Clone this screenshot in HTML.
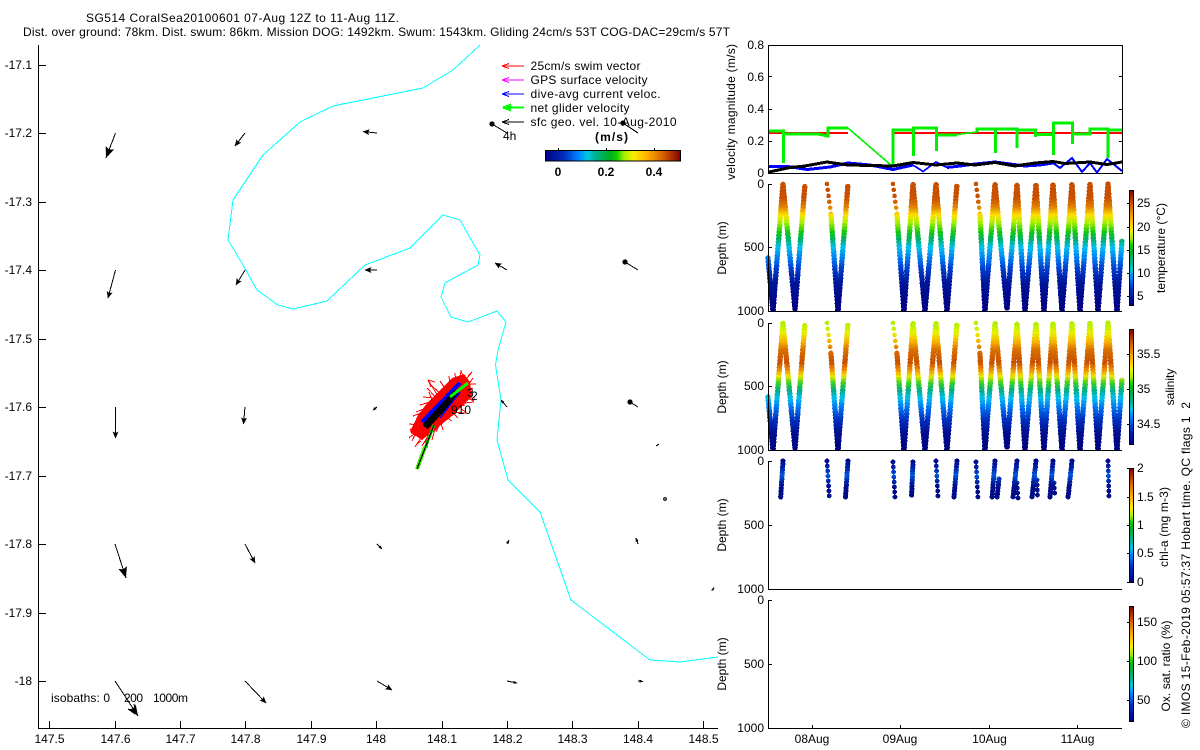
<!DOCTYPE html>
<html><head><meta charset="utf-8"><style>
html,body{margin:0;padding:0;background:#fff;width:1200px;height:750px;overflow:hidden}
svg{display:block}
text{font-family:"Liberation Sans",sans-serif;font-size:12px;fill:#000}
.e{text-anchor:end}.m{text-anchor:middle}.b{font-weight:bold}
.ax line,.ax path{stroke:#000;stroke-width:1;fill:none}
.ar line{stroke:#000;stroke-width:1;fill:none}
</style></head><body>
<svg width="1200" height="750" viewBox="0 0 1200 750" xmlns="http://www.w3.org/2000/svg">
<defs>
<linearGradient id="jv" x1="0" y1="1" x2="0" y2="0">
<stop offset="0" stop-color="#000080"/><stop offset=".14" stop-color="#0030c0"/><stop offset=".24" stop-color="#0080ff"/><stop offset=".31" stop-color="#00c8e0"/><stop offset=".37" stop-color="#00b090"/><stop offset=".48" stop-color="#00b020"/><stop offset=".53" stop-color="#10d000"/><stop offset=".58" stop-color="#a0ee00"/><stop offset=".65" stop-color="#f8f000"/><stop offset=".75" stop-color="#ffb000"/><stop offset=".87" stop-color="#d86000"/><stop offset="1" stop-color="#800000"/>
</linearGradient>
<linearGradient id="jh" x1="0" y1="0" x2="1" y2="0">
<stop offset="0" stop-color="#000080"/><stop offset=".14" stop-color="#0030c0"/><stop offset=".24" stop-color="#0080ff"/><stop offset=".31" stop-color="#00c8e0"/><stop offset=".37" stop-color="#00b090"/><stop offset=".48" stop-color="#00b020"/><stop offset=".53" stop-color="#10d000"/><stop offset=".58" stop-color="#a0ee00"/><stop offset=".65" stop-color="#f8f000"/><stop offset=".75" stop-color="#ffb000"/><stop offset=".87" stop-color="#d86000"/><stop offset="1" stop-color="#800000"/>
</linearGradient>
<linearGradient id="gt" gradientUnits="userSpaceOnUse" x1="0" y1="184" x2="0" y2="311">
<stop offset="0" stop-color="#c84e00"/><stop offset=".11" stop-color="#c85000"/><stop offset=".18" stop-color="#e08000"/><stop offset=".245" stop-color="#ffe000"/><stop offset=".3" stop-color="#b0f000"/><stop offset=".38" stop-color="#10c810"/><stop offset=".44" stop-color="#00b070"/><stop offset=".5" stop-color="#00c0f0"/><stop offset=".58" stop-color="#0080f0"/><stop offset=".66" stop-color="#0040d0"/><stop offset=".78" stop-color="#001498"/><stop offset="1" stop-color="#000080"/>
</linearGradient>
<linearGradient id="gs" gradientUnits="userSpaceOnUse" x1="0" y1="184" x2="0" y2="311">
<stop offset="0" stop-color="#b0f000"/><stop offset=".08" stop-color="#e8f000"/><stop offset=".15" stop-color="#f8b000"/><stop offset=".21" stop-color="#d87000"/><stop offset=".31" stop-color="#c85000"/><stop offset=".37" stop-color="#f09000"/><stop offset=".42" stop-color="#e8e800"/><stop offset=".47" stop-color="#40d020"/><stop offset=".53" stop-color="#00b080"/><stop offset=".59" stop-color="#00c0f0"/><stop offset=".67" stop-color="#0070f0"/><stop offset=".76" stop-color="#0030c0"/><stop offset=".86" stop-color="#001090"/><stop offset="1" stop-color="#000080"/>
</linearGradient>
<linearGradient id="gc" gradientUnits="userSpaceOnUse" x1="0" y1="461" x2="0" y2="498">
<stop offset="0" stop-color="#000c90"/><stop offset=".2" stop-color="#0024a8"/><stop offset=".38" stop-color="#0058dc"/><stop offset=".55" stop-color="#0024a8"/><stop offset=".7" stop-color="#000c88"/><stop offset="1" stop-color="#000c88"/>
</linearGradient>
<path id="vm" d="M768,258 L773,311 L783,184 L795,309 L805,184 M831,215 L838,311 L848,184 M897,215 L904,311 L913,184 L925,311 L936,184 L947,311 L957,184 M980,215 L985,311 L995,184 L1007,309 L1017,184 L1025,311 L1036,184 L1044,311 L1053,184 L1062,311 L1072,184 L1080,311 L1090,184 L1098,311 L1108,184 L1117,311 L1122,240"/>
<path id="vt" d="M827,184 L831,215 M893,184 L897,215 M976,184 L980,215"/>
<clipPath id="c2"><rect x="760" y="178" width="368" height="133"/></clipPath>
<clipPath id="c3"><rect x="760" y="317" width="368" height="133"/></clipPath>
<marker id="a1" markerUnits="userSpaceOnUse" markerWidth="12" markerHeight="10" refX="11" refY="5" viewBox="0 0 12 10" orient="auto"><path d="M0,0.5 L11,5 L0,9.5 L2,5 Z" fill="#000"/></marker>
<marker id="a2" markerUnits="userSpaceOnUse" markerWidth="7" markerHeight="6" refX="6.5" refY="3" viewBox="0 0 7 6" orient="auto"><path d="M0,0 L7,3 L0,6 L1.5,3 Z" fill="#000"/></marker>
<marker id="a3" markerUnits="userSpaceOnUse" markerWidth="4" markerHeight="4" refX="3.5" refY="2" viewBox="0 0 4 4" orient="auto"><path d="M0,.5 L4,2 L0,3.5 Z" fill="#000"/></marker>
<marker id="d1" markerUnits="userSpaceOnUse" markerWidth="6" markerHeight="6" refX="3" refY="3" viewBox="0 0 6 6" orient="auto"><circle cx="3" cy="3" r="2.6" fill="#000"/></marker>
</defs>

<!-- titles -->
<text x="86" y="22" textLength="313">SG514 CoralSea20100601 07-Aug 12Z to 11-Aug 11Z.</text>
<text x="23" y="36" textLength="707">Dist. over ground: 78km. Dist. swum: 86km. Mission DOG: 1492km. Swum: 1543km. Gliding 24cm/s 53T COG-DAC=29cm/s 57T</text>

<!-- map axes -->
<g class="ax" shape-rendering="crispEdges">
<line x1="38.5" y1="45" x2="38.5" y2="729"/><line x1="38" y1="728.5" x2="718" y2="728.5"/>
<path d="M39,65.5h7M39,133.5h7M39,202.5h7M39,270.5h7M39,339.5h7M39,407.5h7M39,476.5h7M39,544.5h7M39,613.5h7M39,681.5h7"/>
<path d="M49.5,728v-7M115.5,728v-7M180.5,728v-7M245.5,728v-7M311.5,728v-7M376.5,728v-7M442.5,728v-7M507.5,728v-7M572.5,728v-7M638.5,728v-7M703.5,728v-7"/>
</g>
<g class="e">
<text x="32" y="69">-17.1</text><text x="32" y="137">-17.2</text><text x="32" y="206">-17.3</text><text x="32" y="274">-17.4</text><text x="32" y="343">-17.5</text><text x="32" y="411">-17.6</text><text x="32" y="480">-17.7</text><text x="32" y="548">-17.8</text><text x="32" y="617">-17.9</text><text x="32" y="685">-18</text>
</g>
<g class="m">
<text x="49.5" y="743">147.5</text><text x="115.5" y="743">147.6</text><text x="180.5" y="743">147.7</text><text x="245.5" y="743">147.8</text><text x="311.5" y="743">147.9</text><text x="376" y="743">148</text><text x="442" y="743">148.1</text><text x="507.5" y="743">148.2</text><text x="572.5" y="743">148.3</text><text x="638" y="743">148.4</text><text x="703.5" y="743">148.5</text>
</g>

<!-- isobath -->
<polyline shape-rendering="crispEdges" fill="none" stroke="#00ffff" stroke-width="1" points="480,45 453,70 423,88 333,106 300,122 263,155 233,200 228,240 243,265 257,290 278,305 293,309 327,301 365,265 410,248 443,215 460,220 480,255 478,265 445,283 441,297 451,317 468,322 497,311 506,322 498,350 495.5,365 501,400 497,440 508,480 540,512 571,600 650,660 680,662 718,657"/>

<!-- glider blob -->
<g shape-rendering="crispEdges">
<polygon fill="#ff0000" points="410,432 418,415 428,402 440,390 452,378 464,374 470,382 472,396 462,406 452,416 442,424 432,432 422,440"/>
<path fill="none" stroke="#ff0000" stroke-width="1" d="M425,425L409,438M422,420L410,430M420,424L412,441M426,430L415,447M430,428L427,448M433,425L425,443M436,425L432,440M440,420L443,430M444,416L452,421M448,412L466,413M452,408L465,405M456,404L474,402M460,398L475,398M464,392L473,388M466,388L473,378M464,382L472,372M460,380L461,370M456,384L455,373M450,386L449,376M446,390L440,381M441,394L432,386M438,396L428,380M434,398L423,397M430,402L420,405M426,408L416,412M424,412L413,416M418,425L409,424M442,404L427,388M432,400L429,392M420,432L411,433M428,436L422,446M440,424L436,432M452,412L458,418M466,396L472,395M468,384L476,384M428,380L435,382M428,380L431,387M411,429L416,431M413,437L418,434M417,444L421,441M427,446L429,441M466,412L461,409M474,401L469,399M472,372L468,376M461,371L463,376M416,420L423,418M419,415L426,420M437,414L444,420M430,434L438,428"/>
<line x1="422" y1="422" x2="460" y2="383" stroke="#0000ff" stroke-width="4"/>
<line x1="425" y1="427" x2="457" y2="392" stroke="#000" stroke-width="7"/>
<line x1="440" y1="418" x2="460" y2="392" stroke="#0000ff" stroke-width="1.5"/>
<line x1="450" y1="397" x2="468" y2="383" stroke="#00ff00" stroke-width="3"/>
<line x1="434" y1="425" x2="417" y2="469" stroke="#00e000" stroke-width="3"/>
<line x1="425" y1="447" x2="417" y2="469" stroke="#40f000" stroke-width="4"/>
<line x1="434" y1="425" x2="417" y2="469" stroke="#000" stroke-width="1.2"/>
</g>
<text x="451" y="414">910</text>
<text x="467" y="397">3</text>
<text x="471" y="400">2</text>

<!-- surface velocity arrows -->
<g class="ar" shape-rendering="crispEdges">
<line x1="115.5" y1="133" x2="106" y2="158" marker-end="url(#a1)"/>
<line x1="245" y1="133" x2="235" y2="146" marker-end="url(#a2)"/>
<line x1="377" y1="133" x2="363" y2="131.5" marker-end="url(#a2)"/>
<line x1="507" y1="133" x2="492" y2="124" marker-end="url(#d1)"/>
<line x1="638" y1="133" x2="623" y2="123" marker-end="url(#d1)"/>
<line x1="115.5" y1="270" x2="108" y2="298" marker-end="url(#a2)"/>
<line x1="245" y1="270" x2="236" y2="285" marker-end="url(#a2)"/>
<line x1="377" y1="270" x2="365" y2="270" marker-end="url(#a2)"/>
<line x1="507" y1="270" x2="495" y2="263" marker-end="url(#a2)"/>
<line x1="638" y1="270" x2="625" y2="262" marker-end="url(#d1)"/>
<line x1="115.5" y1="407" x2="115.5" y2="438" marker-end="url(#a2)"/>
<line x1="245" y1="407" x2="243.5" y2="424" marker-end="url(#a2)"/>
<line x1="377" y1="407" x2="373" y2="410" marker-end="url(#a3)"/>
<line x1="507" y1="407" x2="501" y2="400" marker-end="url(#a3)"/>
<line x1="638" y1="407" x2="630" y2="402" marker-end="url(#d1)"/>
<line x1="659" y1="444" x2="656" y2="446"/>
<line x1="115" y1="544" x2="126" y2="578" marker-end="url(#a1)"/>
<line x1="245" y1="544" x2="255" y2="563" marker-end="url(#a2)"/>
<line x1="377" y1="544" x2="382" y2="549" marker-end="url(#a3)"/>
<line x1="507" y1="544" x2="509" y2="540" marker-end="url(#a3)"/>
<line x1="638" y1="544" x2="636" y2="538" marker-end="url(#a3)"/>
<line x1="115" y1="681" x2="138" y2="716" marker-end="url(#a1)"/>
<line x1="245" y1="681" x2="266" y2="703" marker-end="url(#a2)"/>
<line x1="377" y1="681" x2="392" y2="690" marker-end="url(#a2)"/>
<line x1="507" y1="681" x2="517" y2="683" marker-end="url(#a3)"/>
<line x1="638" y1="681" x2="643" y2="681.5" marker-end="url(#a3)"/>
<line x1="128" y1="709" x2="135" y2="714" stroke-width="2"/>
<line x1="134" y1="704" x2="136" y2="714" stroke-width="2"/>
</g>
<circle cx="665" cy="499" r="1.3" fill="#fff" stroke="#000" stroke-width="1.2"/>
<path d="M712,590l2,-2.5l-1,2.5z" fill="#000" stroke="#000"/>

<!-- legend -->
<g shape-rendering="crispEdges" fill="none">
<path stroke="#ff0000" d="M502,66h22M502,66l7,-2.5M502,66l7,2.5M505,66h4"/>
<path stroke="#ff00ff" d="M502,80h22M502,80l7,-2.5M502,80l7,2.5"/>
<path stroke="#0000ff" d="M502,94h22M502,94l7,-2.5M502,94l7,2.5"/>
<path stroke="#00ff00" stroke-width="2" d="M503,107.5h21M503,107.5l8,-3M503,107.5l8,3"/>
<path stroke="#00ff00" stroke-width="3" d="M503,107.5h8"/>
<path stroke="#000" d="M502,122h22M502,122l7,-2.5M502,122l7,2.5"/>
</g>
<text x="530.5" y="70" textLength="110">25cm/s swim vector</text>
<text x="530.5" y="84" textLength="117">GPS surface velocity</text>
<text x="530.5" y="98" textLength="130">dive-avg current veloc.</text>
<text x="530.5" y="112" textLength="99">net glider velocity</text>
<text x="530.5" y="126" textLength="146">sfc geo. vel. 10-Aug-2010</text>
<text x="503" y="140">4h</text>
<text class="b" x="595" y="141" textLength="33">(m/s)</text>
<rect x="545.5" y="150.5" width="135" height="10.5" fill="url(#jh)" stroke="#000"/>
<path d="M558.5,150v-2M606.5,150v-2M654.5,150v-2" stroke="#000" shape-rendering="crispEdges"/>
<g class="m b"><text x="558" y="176">0</text><text x="606" y="176">0.2</text><text x="654" y="176">0.4</text></g>
<text x="51" y="702" textLength="59">isobaths: 0</text>
<text x="124" y="702" textLength="19">200</text>
<text x="153" y="702" textLength="35">1000m</text>

<!-- panel 1 -->
<g class="ax" shape-rendering="crispEdges">
<rect x="768.5" y="45.5" width="354" height="128" fill="none" stroke="#000"/>
<path d="M769,76.5h3M769,109.5h3M769,141.5h3M1122,76.5h-3M1122,109.5h-3M1122,141.5h-3"/>
</g>
<g class="e"><text x="764" y="49">0.8</text><text x="764" y="81">0.6</text><text x="764" y="113">0.4</text><text x="764" y="145">0.2</text><text x="764" y="177">0</text></g>
<text class="m" transform="rotate(-90 735 112)" x="735" y="112" textLength="136">velocity magnitude (m/s)</text>
<g fill="none" stroke-linejoin="miter" shape-rendering="crispEdges">
<path stroke="#ff0000" stroke-width="2" d="M769,133H848M893,133H1122"/>
<path stroke="#00f000" stroke-width="3" d="M769,131H783.5V163V134H818L828,136V128H848M893,166V130H913.5V156V128H936.5V151V135H957M977,132V129H995.5V153V129H1017V148V130H1035.5V137V134.5H1053.5V155V123H1072.5V144V134H1090V129H1108V158V130H1122"/>
<path stroke="#00f000" stroke-width="1.6" d="M848,128L892,166M957,134.5L977,132"/>
<path stroke="#0000ff" stroke-width="3" d="M769,166.5H788L807,169.5L830,167L848,163L870,165L893,169.5L913,165"/>
<path stroke="#0000ff" stroke-width="1.7" d="M913,165L923,171.5L936,162L947,167.5"/>
<path stroke="#0000ff" stroke-width="3" d="M947,167.5L960,166L975,164L995,162L1010,164L1025,166L1040,165L1053,163"/>
<path stroke="#0000ff" stroke-width="2" d="M1053,163L1060,168L1072,158L1082,172L1090,163L1097,172.5L1107,159L1122,171"/>
<path stroke="#000" stroke-width="3" d="M769,172L790,167.5L805,166L827,162L848,165L893,166L913,162.5L936,165L957,163L975,165L995,162.5L1015,166L1035,163L1053,161.5L1065,163.5L1090,162L1107,164.5L1122,162"/>
</g>

<!-- panel 2 temperature -->
<g clip-path="url(#c2)" shape-rendering="crispEdges" fill="none">
<use href="#vm" stroke="url(#gt)" stroke-width="3.4"/>
<use href="#vm" stroke="url(#gt)" stroke-width="5.6" stroke-linecap="round" stroke-dasharray="0 3.4"/>
<use href="#vt" stroke="url(#gt)" stroke-width="4.6" stroke-linecap="round" stroke-dasharray="0 6"/>
</g>
<!-- panel 3 salinity -->
<g clip-path="url(#c3)"><g transform="translate(0 139)" shape-rendering="crispEdges" fill="none">
<use href="#vm" stroke="url(#gs)" stroke-width="3.4"/>
<use href="#vm" stroke="url(#gs)" stroke-width="5.6" stroke-linecap="round" stroke-dasharray="0 3.4"/>
<use href="#vt" stroke="url(#gs)" stroke-width="4.6" stroke-linecap="round" stroke-dasharray="0 6"/>
</g></g>
<!-- panel 4 chl -->
<g fill="none" stroke-linecap="round" shape-rendering="crispEdges">
<path stroke="url(#gc)" stroke-width="5.2" stroke-dasharray="0 3" d="M783,461L780.7,497M848,461L845.5,497M913,462L911.5,497M957,461L954,497M995,461L992,498M999,479L997,498M1017,461L1013,497M1036,461L1032,497M1053,461L1050,497M1072,461L1068,498"/>
<path stroke="url(#gc)" stroke-width="4.8" stroke-dasharray="0 5" d="M827,461L829.3,497M893,462L895,497M936,461L938,497M976,462L978,498M1108,461L1109,498M1017,483L1018,498M1037,480L1037.5,497M1054,483L1055,497"/>
</g>

<!-- lower axes -->
<g class="ax" shape-rendering="crispEdges">
<path d="M768.5,184V311.5H1122M768.5,323V450.5H1122M768.5,461V589.5H1122M768.5,600V728.5H1122"/>
<path d="M769,184.5h3M769,247.5h3M769,323.5h3M769,386.5h3M769,461.5h3M769,525.5h3M769,600.5h3M769,664.5h3"/>
<path d="M812.5,728v-3M900.5,728v-3M989.5,728v-3M1077.5,728v-3"/>
</g>
<g class="e">
<text x="764" y="188">0</text><text x="764" y="251">500</text><text x="764" y="315">1000</text>
<text x="764" y="327">0</text><text x="764" y="390">500</text><text x="764" y="454">1000</text>
<text x="764" y="465">0</text><text x="764" y="529">500</text><text x="764" y="593">1000</text>
<text x="764" y="604">0</text><text x="764" y="668">500</text><text x="764" y="732">1000</text>
</g>
<g class="m">
<text transform="rotate(-90 726 248)" x="726" y="248">Depth (m)</text>
<text transform="rotate(-90 726 387)" x="726" y="387">Depth (m)</text>
<text transform="rotate(-90 726 525)" x="726" y="525">Depth (m)</text>
<text transform="rotate(-90 726 664)" x="726" y="664">Depth (m)</text>
<text x="812" y="743">08Aug</text><text x="900" y="743">09Aug</text><text x="989.5" y="743">10Aug</text><text x="1077.5" y="743">11Aug</text>
</g>

<!-- colorbars -->
<g shape-rendering="crispEdges">
<rect x="1129.5" y="190.5" width="4" height="115" fill="url(#jv)" stroke="#000"/>
<rect x="1129.5" y="329.5" width="4" height="115" fill="url(#jv)" stroke="#000"/>
<rect x="1129.5" y="468.5" width="4" height="114" fill="url(#jv)" stroke="#000"/>
<rect x="1129.5" y="606.5" width="4" height="115" fill="url(#jv)" stroke="#000"/>
<path stroke="#000" fill="none" d="M1127,203.5h2M1127,227.5h2M1127,250.5h2M1127,273.5h2M1127,296.5h2M1127,354.5h2M1127,389.5h2M1127,424.5h2M1127,468.5h2M1127,497.5h2M1127,525.5h2M1127,553.5h2M1127,582.5h2M1127,622.5h2M1127,661.5h2M1127,700.5h2"/>
</g>
<text x="1137" y="207">25</text><text x="1137" y="231">20</text><text x="1137" y="254">15</text><text x="1137" y="277">10</text><text x="1137" y="300">5</text>
<text x="1137" y="358">35.5</text><text x="1137" y="393">35</text><text x="1137" y="428">34.5</text>
<text x="1137" y="472">2</text><text x="1137" y="501">1.5</text><text x="1137" y="529">1</text><text x="1137" y="557">0.5</text><text x="1137" y="586">0</text>
<text x="1137" y="626">150</text><text x="1137" y="665">100</text><text x="1137" y="704">50</text>
<g class="m">
<text transform="rotate(-90 1165 248)" x="1165" y="248" textLength="90">temperature (°C)</text>
<text transform="rotate(-90 1174 387)" x="1174" y="387">salinity</text>
<text transform="rotate(-90 1168 527)" x="1168" y="527" textLength="80">chl-a (mg m-3)</text>
<text transform="rotate(-90 1170 666)" x="1170" y="666" textLength="91">Ox. sat. ratio (%)</text>
</g>
<text transform="rotate(-90 1190 728)" x="1190" y="728" textLength="326" xml:space="preserve">© IMOS 15-Feb-2019 05:57:37 Hobart time. QC flags 1  2</text>
</svg>
</body></html>
